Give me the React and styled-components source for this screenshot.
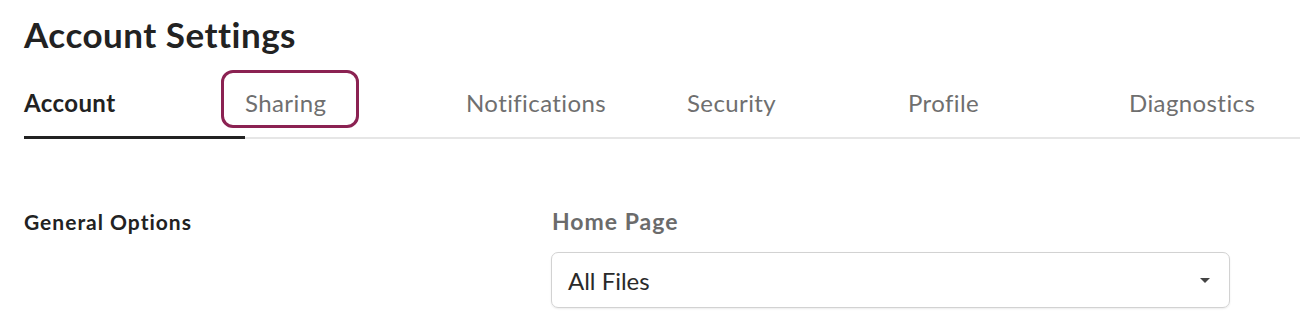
import React from "react";
import styled, { createGlobalStyle } from "styled-components";

const Global = createGlobalStyle`
  html, body { margin: 0; padding: 0; background: #fff; }
  body { font-family: Lato, "Open Sans", sans-serif; color: #222; }
  * { box-sizing: border-box; }
`;

const Page = styled.div`
  width: 1300px;
  height: 332px;
  overflow: hidden;
  padding: 12px 0 0 24px;
`;

const Title = styled.h1`
  margin: 0;
  font-size: 35px;
  font-weight: 700;
  line-height: 44px;
  letter-spacing: 0.5px;
  color: #222;
`;

const TabList = styled.div`
  display: flex;
  border-bottom: 2px solid #e6e6e6;
  height: 83px;
`;

const Tab = styled.div`
  position: relative;
  flex: 0 0 221px;
  display: flex;
  align-items: flex-end;
  padding-bottom: 20px;
  font-size: 24px;
  line-height: 29px;
  letter-spacing: 0.4px;
  font-weight: ${(p) => (p.$active ? 700 : 400)};
  color: ${(p) => (p.$active ? "#222" : "#6f6f6f")};
  &::after {
    content: "";
    display: ${(p) => (p.$active ? "block" : "none")};
    position: absolute;
    left: 0;
    right: 0;
    bottom: -2px;
    height: 3px;
    background: #222;
  }
`;

const TabLabel = styled.span`
  position: relative;
  &::before {
    content: "";
    display: ${(p) => (p.$focused ? "block" : "none")};
    position: absolute;
    left: -24px;
    right: -33px;
    top: -18px;
    bottom: -11px;
    border: 3px solid #8b2252;
    border-radius: 12px;
  }
`;

const Section = styled.div`
  display: flex;
  align-items: flex-start;
  margin-top: 68px;
`;

const SectionTitle = styled.div`
  width: 527px;
  padding-top: 1px;
  font-size: 21px;
  font-weight: 700;
  letter-spacing: 1px;
  color: #222;
  line-height: 28px;
`;

const Field = styled.div`
  display: flex;
  flex-direction: column;
  gap: 17px;
`;

const Label = styled.div`
  padding-left: 1px;
  font-size: 23px;
  font-weight: 700;
  color: #6b6b6b;
  line-height: 28px;
  letter-spacing: 1px;
`;

const Select = styled.div`
  width: 679px;
  height: 56px;
  border: 1px solid #d2d2d2;
  border-radius: 7px;
  box-shadow: 0 1px 2px rgba(0, 0, 0, 0.08);
  display: flex;
  align-items: center;
  justify-content: space-between;
  padding: 0 19px 0 16px;
  font-size: 24px;
  color: #2a2a2a;
`;

const Caret = styled.span`
  width: 0;
  height: 0;
  border-left: 5px solid transparent;
  border-right: 5px solid transparent;
  border-top: 5px solid #444;
`;

const tabs = ["Account", "Sharing", "Notifications", "Security", "Profile", "Diagnostics"];

export default function App() {
  return (
    <Page>
      <Global />
      <Title>Account Settings</Title>
      <TabList>
        {tabs.map((t, i) => (
          <Tab key={t} $active={i === 0}>
            <TabLabel $focused={i === 1}>{t}</TabLabel>
          </Tab>
        ))}
      </TabList>
      <Section>
        <SectionTitle>General Options</SectionTitle>
        <Field>
          <Label>Home Page</Label>
          <Select>
            <span>All Files</span>
            <Caret />
          </Select>
        </Field>
      </Section>
    </Page>
  );
}
